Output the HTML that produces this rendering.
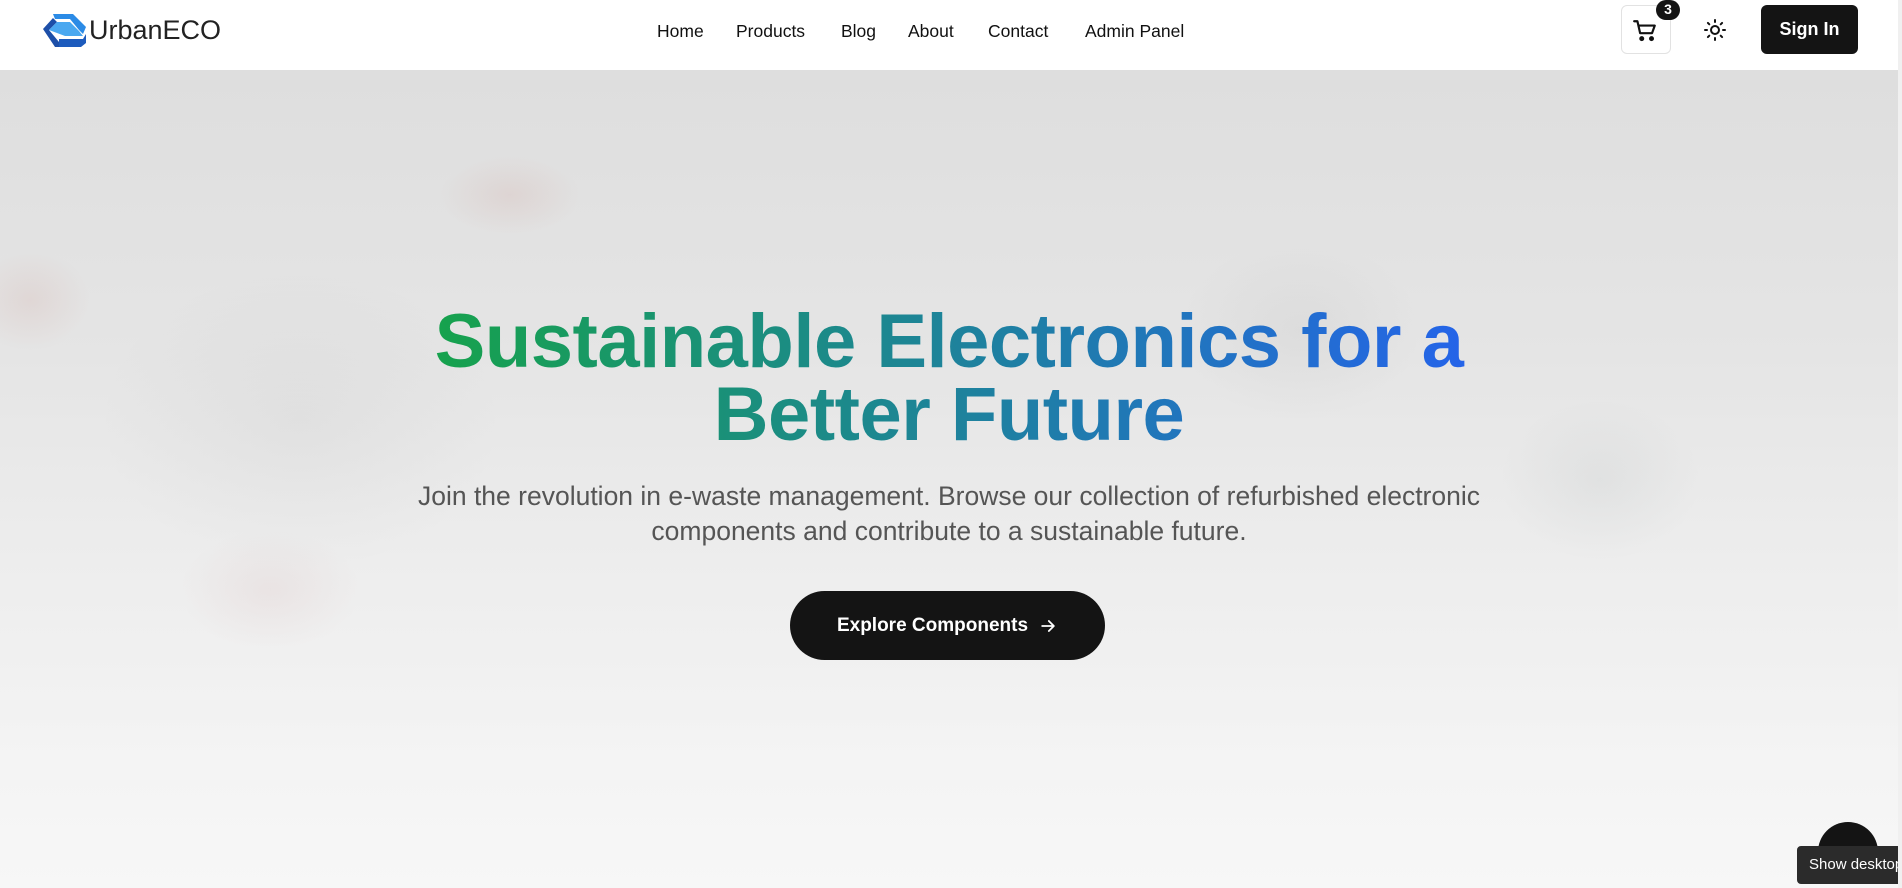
<!DOCTYPE html>
<html><head><meta charset="utf-8"><style>
*{margin:0;padding:0;box-sizing:border-box}
body{width:1902px;height:888px;overflow:hidden;font-family:"Liberation Sans",sans-serif;background:#f3f3f3;position:relative}
.hero{position:absolute;left:0;top:70px;width:1898px;height:818px;
background:
radial-gradient(ellipse 90px 60px at 270px 520px,rgba(200,150,150,.12),transparent),
radial-gradient(ellipse 70px 40px at 510px 125px,rgba(200,140,130,.15),transparent),
radial-gradient(ellipse 60px 50px at 30px 230px,rgba(200,140,130,.15),transparent),
radial-gradient(ellipse 120px 90px at 1300px 260px,rgba(150,150,150,.1),transparent),
radial-gradient(ellipse 100px 80px at 1600px 410px,rgba(140,150,150,.1),transparent),
radial-gradient(ellipse 200px 150px at 300px 350px,rgba(140,140,140,.08),transparent),
linear-gradient(180deg,#dedede 0%,#e5e5e5 35%,#ededed 60%,#f4f4f4 85%,#f7f7f7 100%)}
.scroll{position:absolute;right:0;top:0;width:4px;height:888px;background:#f0f0f0}
header{position:absolute;left:0;top:0;width:1898px;height:70px;background:#fff}
.nav a{position:absolute;top:21px;font-size:17.5px;color:#111;text-decoration:none}
h1{position:absolute;left:0;width:1898px;top:305px;text-align:center;font-size:76px;line-height:73px;font-weight:bold;letter-spacing:-0.5px;
background:linear-gradient(90deg,#16a34a 22%,#2563eb 78%);-webkit-background-clip:text;background-clip:text;color:transparent}
p{position:absolute;left:0;width:1898px;top:479px;text-align:center;font-size:26.5px;line-height:35px;color:#555}
.btn{position:absolute;left:790px;top:591px;width:315px;height:69px;border-radius:35px;background:#141414;color:#fff;font-weight:bold;font-size:19px;display:flex;align-items:center;justify-content:center;gap:10px}
</style></head><body>
<div class="hero"></div>
<header>
<svg style="position:absolute;left:43px;top:14px" width="44" height="34" viewBox="0 0 44 34">
<polygon points="0,15 10,4 14,8 6,16 16,28 16,33 12,33" fill="#1d4fa8"/>
<polygon points="10,0 30,0 43,13 40,20 36,16 27,5 12,5" fill="#2b8be6"/>
<polygon points="6,16 14,8 27,8 36,17 40,22 22,22" fill="#4aa8f0"/>
<polygon points="16,25 40,25 43,20 43,29 38,33 16,33" fill="#1d5bbd"/>
</svg>
<div style="position:absolute;left:89px;top:15px;font-size:27px;color:#222">UrbanECO</div>
<div class="nav">
<a style="left:657px">Home</a><a style="left:736px">Products</a><a style="left:841px">Blog</a><a style="left:908px">About</a><a style="left:988px">Contact</a><a style="left:1085px">Admin Panel</a>
</div>
<div style="position:absolute;left:1621px;top:5px;width:50px;height:49px;border:1px solid #e2e2e2;border-radius:6px"></div>
<svg style="position:absolute;left:1632px;top:18px" width="26" height="26" viewBox="0 0 24 24" fill="none" stroke="#111" stroke-width="2" stroke-linecap="round" stroke-linejoin="round"><path d="M2 3h3l2.5 11h11L21 7H6"/><circle cx="9" cy="19" r="1.3" fill="#111"/><circle cx="18" cy="19" r="1.3" fill="#111"/></svg>
<div style="position:absolute;left:1656px;top:0;width:24px;height:20px;border-radius:10px;background:#141414;color:#fff;font-size:14px;font-weight:bold;text-align:center;line-height:18px">3</div>
<svg style="position:absolute;left:1703px;top:18px" width="24" height="24" viewBox="0 0 24 24" fill="none" stroke="#111" stroke-width="2" stroke-linecap="round"><circle cx="12" cy="12" r="4"/><path d="M12 2v2M12 20v2M2 12h2M20 12h2M4.9 4.9l1.4 1.4M17.7 17.7l1.4 1.4M4.9 19.1l1.4-1.4M17.7 6.3l1.4-1.4"/></svg>
<div style="position:absolute;left:1761px;top:5px;width:97px;height:49px;border-radius:6px;background:#141414;color:#fff;font-weight:bold;font-size:18px;text-align:center;line-height:49px">Sign In</div>
</header>
<h1>Sustainable Electronics for a<br>Better Future</h1>
<p>Join the revolution in e-waste management. Browse our collection of refurbished electronic<br>components and contribute to a sustainable future.</p>
<div class="btn">Explore Components <svg width="20" height="20" viewBox="0 0 24 24" fill="none" stroke="#fff" stroke-width="2.2" stroke-linecap="round" stroke-linejoin="round"><path d="M5 12h14M13 6l6 6-6 6"/></svg></div>
<div style="position:absolute;left:1818px;top:822px;width:60px;height:60px;border-radius:30px;background:#141414"></div>
<div style="position:absolute;left:1797px;top:846px;width:110px;height:38px;border-radius:4px;background:#2b2b2b;color:#fff;font-size:15px;line-height:38px;padding-left:12px;white-space:nowrap;overflow:hidden">Show desktop</div>
<div class="scroll"></div>
</body></html>
